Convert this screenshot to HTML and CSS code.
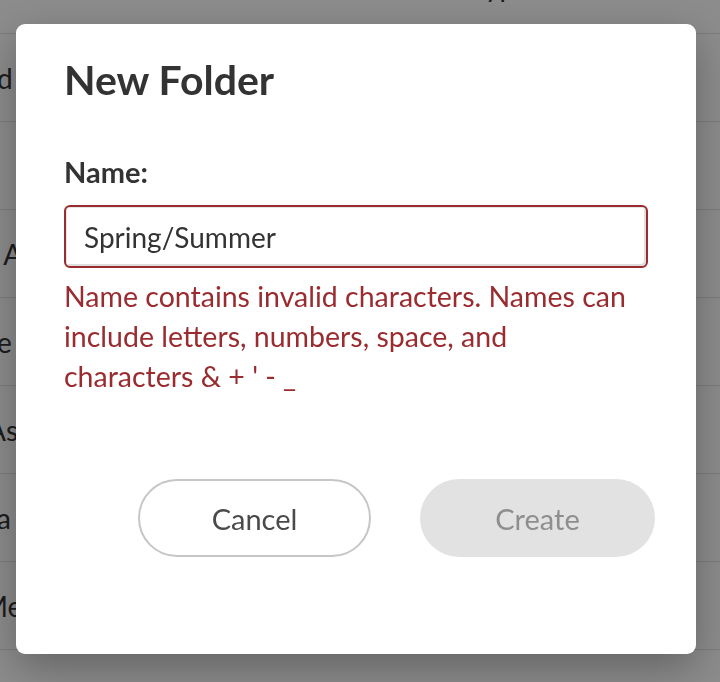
FILE: index.html
```html
<!DOCTYPE html>
<html lang="en">
<head>
<meta charset="utf-8">
<title>New Folder</title>
<link rel="stylesheet" href="styles.css">
</head>
<body>
<div class="page">
  <div class="table">
    <div class="row head"><span class="name"></span><span class="type">Type</span></div>
    <div class="row"><span class="name">d lists</span><span class="type">Folder</span></div>
    <div class="row"><span class="name"></span><span class="type">Folder</span></div>
    <div class="row"><span class="name">&nbsp;Archive</span><span class="type">Folder</span></div>
    <div class="row"><span class="name">e Items</span><span class="type">Folder</span></div>
    <div class="row"><span class="name"><span class="cut-sm">Assets</span></span><span class="type">Folder</span></div>
    <div class="row"><span class="name">a lines</span><span class="type">Folder</span></div>
    <div class="row"><span class="name"><span class="cut">Media</span></span><span class="type">Folder</span></div>
    <div class="row last"><span class="name">&nbsp;Lookbook</span><span class="type">File</span></div>
  </div>
</div>
<div class="overlay">
  <div class="modal" role="dialog" aria-labelledby="dlg-title">
    <h1 class="title" id="dlg-title">New Folder</h1>
    <label class="label" for="folder-name">Name:</label>
    <input class="field" id="folder-name" type="text" value="Spring/Summer">
    <p class="error">Name contains invalid characters. Names can include letters, numbers, space, and characters &amp; + ' - _</p>
    <div class="footer">
      <button class="btn btn-cancel" type="button">Cancel</button>
      <button class="btn btn-create" type="button" disabled>Create</button>
    </div>
  </div>
</div>
</body>
</html>
```

FILE: styles.css
```css
html, body {
  margin: 0;
  padding: 0;
}
body {
  width: 720px;
  height: 682px;
  overflow: hidden;
  background: #ffffff;
  font-family: Lato, "Noto Sans", sans-serif;
  color: #333333;
}
.page {
  width: 720px;
  height: 682px;
  overflow: hidden;
}
.table {
  margin-top: -54px;
  margin-left: -3px;
}
.row {
  display: flex;
  align-items: center;
  height: 87px;
  border-bottom: 1px solid #e2e2e2;
  font-size: 28px;
  color: #333333;
  white-space: nowrap;
}
.row .name {
  width: 474px;
}
.row.head .type {
  margin-bottom: 8px;
}
.row.last {
  align-items: flex-start;
  padding-top: 30px;
  box-sizing: border-box;
}
.cut {
  margin-left: -15px;
}
.cut-sm {
  margin-left: -10px;
}
.overlay {
  position: fixed;
  inset: 0;
  background: rgba(0, 0, 0, 0.45);
}
.modal {
  position: absolute;
  left: 16px;
  top: 24px;
  width: 680px;
  box-sizing: border-box;
  padding: 32px 48px 97px 48px;
  background: #ffffff;
  border-radius: 9px;
  box-shadow: 0 14px 44px rgba(0, 0, 0, 0.3);
  display: flex;
  flex-direction: column;
}
.title {
  margin: 0;
  font-size: 41px;
  line-height: 48px;
  font-weight: 700;
  color: #333333;
}
.label {
  margin-top: 51px;
  font-size: 29px;
  line-height: 34px;
  font-weight: 700;
  color: #333333;
}
.field {
  margin: 16px 0 0 0;
  height: 63px;
  box-sizing: border-box;
  width: 100%;
  padding: 0 18px;
  border: 2px solid #9a2b2e;
  border-radius: 6px;
  box-shadow: inset 0 1px 0 #e6e6e6, inset -2px -2px 0 #dedede, inset 1px 0 0 #e6e6e6;
  font-family: Lato, "Noto Sans", sans-serif;
  font-size: 28px;
  color: #333333;
  background: #ffffff;
  outline: none;
}
.error {
  margin: 8px 0 0 0;
  max-width: 570px;
  font-size: 28.5px;
  line-height: 40px;
  color: #9a2b2e;
}
.footer {
  margin-top: 83px;
  margin-right: -7px;
  display: flex;
  justify-content: flex-end;
  gap: 49px;
}
.btn {
  height: 78px;
  box-sizing: border-box;
  border-radius: 39px;
  font-family: Lato, "Noto Sans", sans-serif;
  font-size: 29px;
  padding: 0;
  cursor: pointer;
}
.btn-cancel {
  width: 233px;
  background: #ffffff;
  border: 2px solid #c6c6c6;
  color: #4a4a4a;
}
.btn-create {
  width: 235px;
  background: #e2e2e2;
  border: none;
  color: #8e8e8e;
}
```
